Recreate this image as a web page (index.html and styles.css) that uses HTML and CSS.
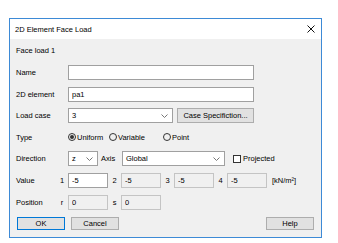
FILE: index.html
```html
<!DOCTYPE html>
<html lang="en">
<head>
    <meta charset="UTF-8">
    <title>2D Element Face Load</title>
    <link rel="stylesheet" href="styles.css">
</head>
<body>
    <div class="dialog">
        <div class="titlebar">
            <span class="title">2D Element Face Load</span>
            <svg class="close" width="8" height="8" viewBox="0 0 8 8">
                <path d="M0.5 0.5 L7.5 7.5 M7.5 0.5 L0.5 7.5" stroke="#111" stroke-width="1" fill="none"/>
            </svg>
        </div>
        <div class="content">
            <div class="heading">Face load 1</div>
            <div class="rows">
                <div class="row">
                    <label class="lbl" for="name">Name</label>
                    <input class="field wide" id="name" type="text">
                </div>
                <div class="row">
                    <label class="lbl" for="element">2D element</label>
                    <input class="field wide" id="element" type="text" value="pa1">
                </div>
                <div class="row">
                    <span class="lbl">Load case</span>
                    <div class="combo case-combo">3
                        <svg class="chev" width="7" height="4" viewBox="0 0 7 4"><path d="M0.5 0.5 L3.5 3.5 L6.5 0.5" stroke="#777" fill="none"/></svg>
                    </div>
                    <button class="btn spec-btn" type="button">Case Specifiction...</button>
                </div>
                <div class="row">
                    <span class="lbl">Type</span>
                    <span class="radio-item uniform"><span class="radio checked"></span>Uniform</span>
                    <span class="radio-item variable"><span class="radio"></span>Variable</span>
                    <span class="radio-item"><span class="radio"></span>Point</span>
                </div>
                <div class="row">
                    <span class="lbl">Direction</span>
                    <div class="combo dir-combo">z
                        <svg class="chev" width="7" height="4" viewBox="0 0 7 4"><path d="M0.5 0.5 L3.5 3.5 L6.5 0.5" stroke="#777" fill="none"/></svg>
                    </div>
                    <span class="axis">Axis</span>
                    <div class="combo axis-combo">Global
                        <svg class="chev" width="7" height="4" viewBox="0 0 7 4"><path d="M0.5 0.5 L3.5 3.5 L6.5 0.5" stroke="#777" fill="none"/></svg>
                    </div>
                    <span class="check"></span>
                    <span class="check-text">Projected</span>
                </div>
                <div class="row">
                    <span class="lbl short">Value</span>
                    <span class="idx first">1</span>
                    <input class="field num" type="text" value="-5">
                    <span class="idx">2</span>
                    <input class="field num" type="text" value="-5" disabled>
                    <span class="idx">3</span>
                    <input class="field num" type="text" value="-5" disabled>
                    <span class="idx">4</span>
                    <input class="field num" type="text" value="-5" disabled>
                    <span class="unit">[kN/m²]</span>
                </div>
                <div class="row">
                    <span class="lbl short">Position</span>
                    <span class="idx first">r</span>
                    <input class="field num" type="text" value="0" disabled>
                    <span class="idx">s</span>
                    <input class="field num" type="text" value="0" disabled>
                </div>
            </div>
            <div class="buttons">
                <button class="btn default" type="button">OK</button>
                <button class="btn cancel" type="button">Cancel</button>
                <button class="btn help" type="button">Help</button>
            </div>
        </div>
    </div>
</body>
</html>
```

FILE: styles.css
```css
body {
    margin: 0;
    padding: 18px 0 0 9px;
    background-color: #fff;
    font-family: "Liberation Sans", Arial, sans-serif;
    font-size: 7.5px;
    color: #000;
}
.dialog {
    width: 313px;
    height: 220px;
    box-sizing: border-box;
    border: 1px solid #3d8ad6;
    display: flex;
    flex-direction: column;
}
.titlebar {
    height: 20px;
    flex: none;
    background-color: #fff;
    display: flex;
    align-items: center;
    padding: 0 6px 0 5px;
}
.title {
    flex: 1;
}
.content {
    flex: 1;
    background-color: #f0f0f0;
    padding: 0 7px 0 6px;
}
.heading {
    height: 12px;
    line-height: 12px;
    margin-top: 6px;
}
.rows {
    display: flex;
    flex-direction: column;
    gap: 6.6px;
    margin-top: 8px;
}
.row {
    height: 15px;
    display: flex;
    align-items: center;
}
.lbl {
    width: 52px;
    flex: none;
}
.lbl.short {
    width: 42px;
}
.field {
    height: 15px;
    box-sizing: border-box;
    border: 1px solid #a0a0a0;
    background-color: #fff;
    font: inherit;
    color: #000;
    padding: 0 3px;
    margin: 0;
    outline: none;
}
.field:disabled {
    background-color: #f0f0f0;
    border-color: #c4c4c4;
    color: #000;
}
.wide {
    width: 186px;
}
.num {
    width: 40px;
}
.idx {
    width: 13px;
    text-align: center;
    flex: none;
}
.idx.first {
    width: 8px;
    margin-right: 2px;
}
.unit {
    margin-left: 5px;
}
.combo {
    height: 15px;
    box-sizing: border-box;
    border: 1px solid #a0a0a0;
    background-color: #fff;
    display: flex;
    align-items: center;
    justify-content: space-between;
    padding: 0 4px 0 3px;
}
.case-combo {
    width: 105px;
    margin-right: 4px;
}
.dir-combo {
    width: 30px;
}
.axis-combo {
    width: 103px;
}
.chev {
    display: block;
}
.axis {
    width: 21px;
    margin-left: 3px;
}
.btn {
    height: 15px;
    box-sizing: border-box;
    border: 1px solid #adadad;
    background-color: #e1e1e1;
    font: inherit;
    color: #000;
    padding: 0;
    margin: 0;
}
.spec-btn {
    width: 77px;
}
.radio-item {
    display: flex;
    align-items: center;
}
.radio-item.uniform {
    width: 41px;
}
.radio-item.variable {
    width: 54px;
}
.radio {
    width: 8px;
    height: 8px;
    box-sizing: border-box;
    border: 1px solid #333;
    border-radius: 50%;
    margin-right: 1px;
    display: flex;
    align-items: center;
    justify-content: center;
}
.radio.checked::after {
    content: "";
    width: 4px;
    height: 4px;
    border-radius: 50%;
    background-color: #333;
}
.check {
    width: 8px;
    height: 8px;
    box-sizing: border-box;
    border: 1px solid #333;
    background-color: #fff;
    margin-left: 8px;
}
.check-text {
    margin-left: 2px;
}
.buttons {
    display: flex;
    margin-top: 7.5px;
    padding-left: 1px;
}
.buttons .btn {
    width: 48px;
    height: 13px;
}
.btn.default {
    border-color: #0078d7;
}
.btn.cancel {
    margin-left: 6px;
}
.btn.help {
    margin-left: auto;
}
```
